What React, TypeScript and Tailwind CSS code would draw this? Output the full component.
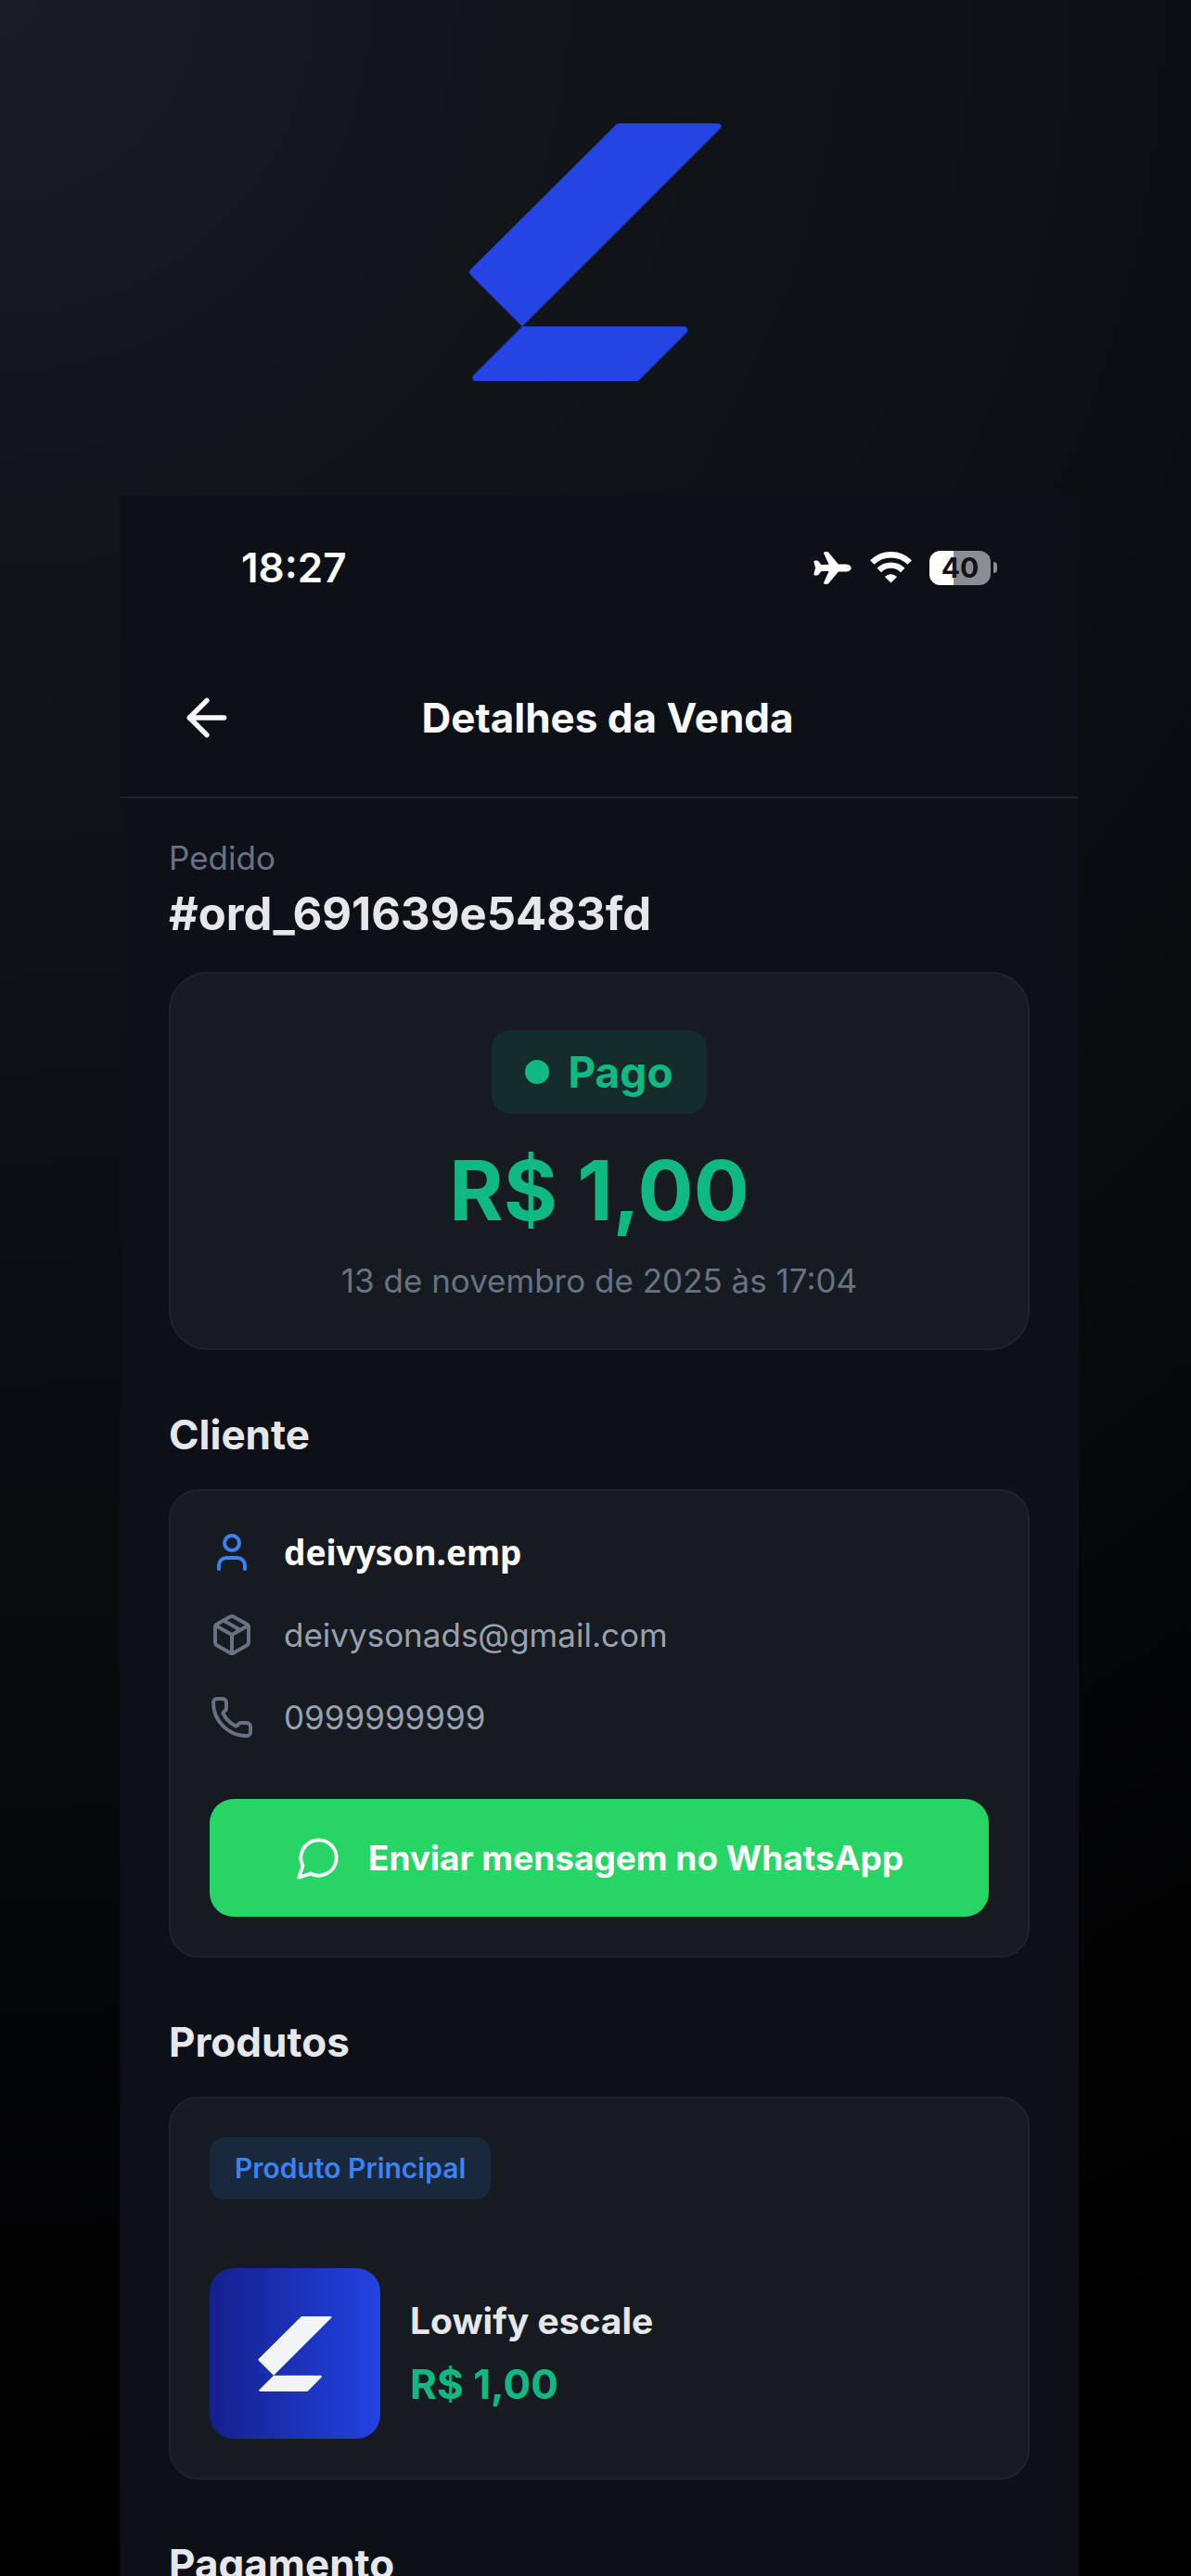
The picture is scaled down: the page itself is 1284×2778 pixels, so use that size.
import type { ReactNode } from 'react';
import { ArrowLeft, Package, Phone, User } from 'lucide-react';
import { IoAirplane } from 'react-icons/io5';

function Logo({ className }: { className?: string }) {
  return (
    <svg viewBox="0 0 272 278" fill="currentColor" className={className} aria-hidden="true">
      <path d="M162 0H269Q273 2 271 5L57 219L1 163Q-1 161 1 158L158 1.500Q160 0 162 0Z" />
      <path d="M57 219H232Q237 221 235 225L184 276Q182 278 180 278H6Q2 276 4 272Z" />
    </svg>
  );
}

function WifiIcon() {
  return (
    <svg viewBox="0 0 45 34" className="w-[45px] h-[34px]" aria-hidden="true">
      <g fill="none" stroke="currentColor" strokeWidth="6.400">
        <path d="M2.300 11.600A28.500 28.500 0 0 1 42.700 11.600" />
        <path d="M9.800 19.900A18 18 0 0 1 35.200 19.900" />
      </g>
      <path
        d="M22.500 33L16.500 27.100A9 9 0 0 1 28.500 27.100Z"
        fill="currentColor"
        stroke="currentColor"
        strokeLinejoin="round"
      />
    </svg>
  );
}

function Battery({ level }: { level: number }) {
  return (
    <div className="flex items-center gap-[3px]">
      <div className="relative flex items-center justify-center w-[66px] h-[37px] rounded-[12px] overflow-hidden bg-[#8a8d91]">
        <div className="absolute inset-y-0 left-0 bg-white" style={{ width: `${level}%` }} />
        <span className="relative text-[30px] leading-none font-bold text-[#101319]">{level}</span>
      </div>
      <div className="w-1 h-3 rounded-r-full bg-[#8a8d91]" />
    </div>
  );
}

function ChatBubble() {
  return (
    <svg
      viewBox="0 0 24 24"
      fill="none"
      stroke="currentColor"
      strokeWidth="1.800"
      strokeLinecap="round"
      strokeLinejoin="round"
      className="size-[51px] shrink-0"
      aria-hidden="true"
    >
      <path d="M7.900 20A9 9 0 1 0 4 16.100L2 22Z" />
    </svg>
  );
}

function Section({ title, children }: { title: string; children?: ReactNode }) {
  return (
    <section className="mt-[63px]">
      <h2 className="mb-[31px] text-[44px] leading-[56px] font-bold text-gray-200">{title}</h2>
      {children && (
        <div className="rounded-[32px] border-2 border-[#1f242b] bg-[#161b22] p-[42px]">{children}</div>
      )}
    </section>
  );
}

function ContactRow({ icon, children }: { icon: ReactNode; children: ReactNode }) {
  return (
    <li className="flex items-center gap-8 h-12">
      {icon}
      {children}
    </li>
  );
}

export default function App() {
  return (
    <div className="h-screen overflow-hidden bg-black bg-[radial-gradient(circle_farthest-side_at_top_left,#171c25_0%,#12161b_20%,#0c0f12_48%,#060709_74%,#000_100%)] font-['Inter',sans-serif]">
      <div className="flex justify-center pt-[133px] pb-[124px]">
        <Logo className="w-[272px] h-[278px] text-[#2444e4]" />
      </div>

      <main className="ml-[129px] mr-[121px] bg-[#0d1117] pb-16">
        <div className="flex items-center justify-between h-[154px] pl-[131px] pr-[88px] text-white">
          <span className="text-[44px] leading-none font-semibold">18:27</span>
          <div className="flex items-center gap-[19px]">
            <IoAirplane className="size-[43px]" />
            <WifiIcon />
            <Battery level={40} />
          </div>
        </div>

        <header className="flex items-center h-[172px] pl-[62px] pr-[54px] border-b-2 border-[#1f242b] text-gray-50">
          <button type="button" aria-label="Voltar">
            <ArrowLeft className="size-16" strokeWidth={2} />
          </button>
          <h1 className="flex-1 pr-[54px] text-center text-[44px] leading-[56px] font-bold">
            Detalhes da Venda
          </h1>
        </header>

        <div className="px-[53px] pt-[42px]">
          <p className="text-[35px] leading-[44px] text-gray-500">Pedido</p>
          <p className="mt-[9px] text-[49px] leading-[60px] font-bold text-gray-200">#ord_691639e5483fd</p>

          <div className="mt-8 flex flex-col items-center rounded-[42px] border-2 border-[#1f242b] bg-[#161b22] pt-[61px] pb-[51px]">
            <div className="flex items-center gap-5 h-[90px] px-9 rounded-[20px] bg-[#152c2d] text-[#10b981]">
              <span className="size-[26px] rounded-full bg-[#10b981]" />
              <span className="text-[46px] leading-none font-bold">Pago</span>
            </div>
            <p className="mt-[31px] text-[89px] leading-[104px] font-bold text-[#10b981]">R$ 1,00</p>
            <time dateTime="2025-11-13T17:04" className="mt-[23px] text-[35px] leading-[44px] text-gray-500">
              13 de novembro de 2025 às 17:04
            </time>
          </div>

          <Section title="Cliente">
            <ul className="flex flex-col gap-[41px]">
              <ContactRow icon={<User className="size-12 text-[#3b82f6]" />}>
                <span className="font-['Noto_Sans',sans-serif] text-[37px] font-bold text-white">deivyson.emp</span>
              </ContactRow>
              <ContactRow icon={<Package className="size-12 text-gray-500" />}>
                <span className="text-[35px] text-gray-400">deivysonads@gmail.com</span>
              </ContactRow>
              <ContactRow icon={<Phone className="size-12 text-gray-500" />}>
                <span className="text-[35px] text-gray-400">0999999999</span>
              </ContactRow>
            </ul>
            <button
              type="button"
              className="mt-16 flex items-center justify-center gap-[28px] w-full h-[127px] rounded-[26px] bg-[#27d567] text-[37px] font-bold text-white"
            >
              <ChatBubble />
              Enviar mensagem no WhatsApp
            </button>
          </Section>

          <Section title="Produtos">
            <span className="flex items-center w-fit h-[67px] px-[27px] rounded-[16px] bg-[#19283a] text-[30px] font-semibold text-[#3b82f6]">
              Produto Principal
            </span>
            <div className="mt-[74px] flex items-center gap-8">
              <div className="flex items-center justify-center size-[184px] shrink-0 rounded-[26px] bg-linear-to-r from-[#14208e] to-[#2343e3]">
                <Logo className="w-[80px] h-[81px] text-gray-100" />
              </div>
              <div className="flex flex-col gap-[14px]">
                <h3 className="text-[39px] leading-[52px] font-bold text-gray-200">Lowify escale</h3>
                <p className="text-[44px] leading-[56px] font-bold text-[#10b981]">R$ 1,00</p>
              </div>
            </div>
          </Section>

          <Section title="Pagamento" />
        </div>
      </main>
    </div>
  );
}
